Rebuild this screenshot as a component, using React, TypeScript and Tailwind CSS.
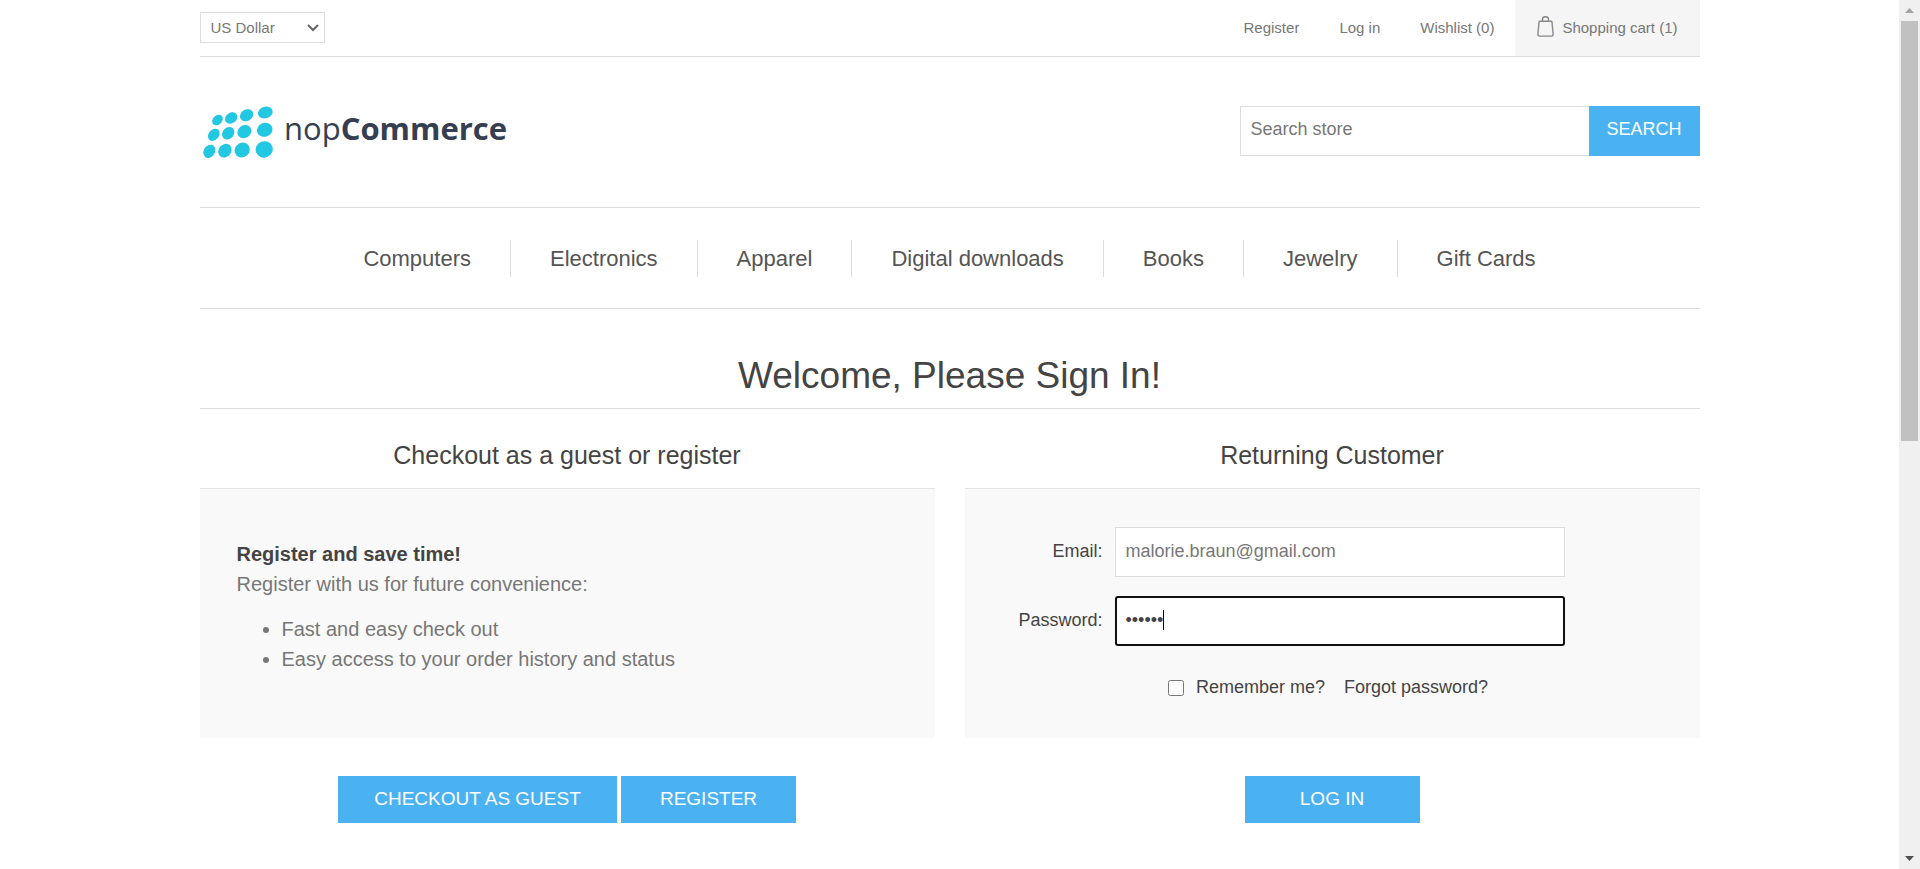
import React, { useState } from "react";

const topLinks = ["Register", "Log in", "Wishlist (0)"];

const categories = [
  "Computers",
  "Electronics",
  "Apparel",
  "Digital downloads",
  "Books",
  "Jewelry",
  "Gift Cards",
];

const benefits = ["Fast and easy check out", "Easy access to your order history and status"];

// cx, cy, rx, ry, rotation
const logoDots: number[][] = [
  [17.5, 25, 6, 4.6, -45],
  [31.2, 23, 6.6, 5.3, -35],
  [46.6, 20.2, 6.9, 5.7, -30],
  [65.3, 17.5, 7.5, 5.9, -18],
  [13.8, 39.8, 6.8, 5.1, -50],
  [28.2, 38.3, 6.8, 5.6, -45],
  [44.4, 36.6, 7.3, 6.3, -35],
  [64.7, 34.8, 7.9, 6.9, -20],
  [9.3, 56.3, 7, 5.6, -55],
  [24.9, 55.7, 7.3, 6.3, -50],
  [42.2, 55, 7.9, 7.2, -45],
  [64.2, 54.4, 8.6, 8.2, -20],
];

function Logo() {
  return (
    <a href="#" aria-label="nopCommerce" className="flex items-center">
      <svg width="312" height="75" viewBox="0 -2 312 75" aria-hidden="true">
        <g fill="#22c7e1">
          {logoDots.map(([cx, cy, rx, ry, a]) => (
            <ellipse
              key={`${cx}-${cy}`}
              cx={cx}
              cy={cy}
              rx={rx}
              ry={ry}
              transform={`rotate(${a} ${cx} ${cy})`}
            />
          ))}
        </g>
        <text x="84" y="45" fontSize="31" fill="#363f51" fontFamily="'Open Sans', sans-serif">
          nop
          <tspan fontWeight="700">Commerce</tspan>
        </text>
      </svg>
    </a>
  );
}

function BagIcon() {
  return (
    <svg
      className="mb-1"
      width="17"
      height="21"
      viewBox="0 0 17 21"
      fill="none"
      stroke="#888"
      strokeWidth="1.4"
      aria-hidden="true"
    >
      <path d="M3 5.2h11c.6 0 .9.3 1 .9l1.1 12.2c.1 1-.6 1.8-1.6 1.8h-12c-1 0-1.700-.8-1.600-1.800L2 6.100c.1-.6.4-.9 1-.9z" />
      <path d="M5.500 5V3.200C5.500 1.700 6.800.8 8.500.8s3 .9 3 2.400V5" />
    </svg>
  );
}

function TopBar() {
  return (
    <div className="flex h-[57px] items-stretch justify-between border-b border-[#ddd] text-[15px] text-[#777]">
      <div className="relative mt-3 h-[31px] w-[125px]">
        <select
          aria-label="Currency"
          className="h-full w-full appearance-none border border-[#ddd] bg-white pt-px pl-[10px] text-[15px] text-[#777] outline-none"
        >
          <option>US Dollar</option>
          <option>Euro</option>
        </select>
        <svg
          className="pointer-events-none absolute top-3 right-[6px]"
          width="12"
          height="8"
          viewBox="0 0 12 8"
          fill="none"
          stroke="#666"
          strokeWidth="2"
          aria-hidden="true"
        >
          <path d="M1 1l5 5 5-5" />
        </svg>
      </div>
      <div className="flex">
        <nav className="flex items-center gap-10 pr-[21px]">
          {topLinks.map((label) => (
            <a key={label} href="#">
              {label}
            </a>
          ))}
        </nav>
        <a href="#" className="flex items-center gap-2 bg-[#f5f5f5] px-[22px]">
          <BagIcon />
          <span>Shopping cart (1)</span>
        </a>
      </div>
    </div>
  );
}

function Header() {
  return (
    <header>
      <TopBar />
      <div className="flex items-center justify-between pt-9 pb-[39px]">
        <Logo />
        <form className="flex h-[50px]" onSubmit={(e) => e.preventDefault()}>
          <input
            type="text"
            aria-label="Search store"
            placeholder="Search store"
            className="w-[349px] border border-r-0 border-[#ddd] bg-white px-[10px] pb-[2px] text-[18px] outline-none placeholder:text-[#777]"
          />
          <button type="submit" className="w-[111px] bg-[#4ab2f1] pb-[2px] text-[18px] text-white">
            SEARCH
          </button>
        </form>
      </div>
      <nav className="flex justify-center border-y border-[#ddd] pt-8 pb-[31px]">
        <ul className="flex divide-x divide-[#ddd]">
          {categories.map((label) => (
            <li key={label} className="px-[39px]">
              <a href="#" className="block text-[22px] leading-[37px] text-[#555]">
                {label}
              </a>
            </li>
          ))}
        </ul>
      </nav>
    </header>
  );
}

function ActionButton({ children, className }: { children: React.ReactNode; className: string }) {
  return (
    <button type="button" className={`h-[47px] bg-[#4ab2f1] text-[19px] text-white ${className}`}>
      {children}
    </button>
  );
}

function Panel({ title, children, actions }: { title: string; children: React.ReactNode; actions: React.ReactNode }) {
  return (
    <section className="flex flex-col">
      <h2 className="pb-4 text-center text-[25px] leading-[33px] text-[#444]">{title}</h2>
      <div className="h-[250px] border-t border-[#e4e4e4] bg-[#f9f9f9]">{children}</div>
      <div className="flex justify-center gap-1 pt-[38px]">{actions}</div>
    </section>
  );
}

function LoginForm() {
  const [email, setEmail] = useState("malorie.braun@gmail.com");
  const [password, setPassword] = useState("secret");
  return (
    <form className="pt-[38px] text-[18px] text-[#444]" onSubmit={(e) => e.preventDefault()}>
      <div className="mb-[19px] flex items-center gap-3">
        <label htmlFor="email" className="w-[138px] pb-px text-right">
          Email:
        </label>
        <input
          id="email"
          type="email"
          value={email}
          onChange={(e) => setEmail(e.target.value)}
          className="h-[50px] w-[450px] border border-[#ddd] bg-white px-[10px] pb-px text-[#777] outline-none"
        />
      </div>
      <div className="flex items-center gap-3">
        <label htmlFor="password" className="w-[138px] pb-px text-right">
          Password:
        </label>
        <div className="relative">
          <input
            id="password"
            type="password"
            value={password}
            onChange={(e) => setPassword(e.target.value)}
            className="block h-[50px] w-[450px] rounded-[3px] border-2 border-[#101010] bg-white px-[9px] pb-px outline-none"
          />
          <span className="absolute top-[14px] left-[48px] h-5 w-px bg-black" />
        </div>
      </div>
      <div className="flex items-center justify-center gap-[19px] pt-7 pr-2">
        <div className="flex items-center gap-3">
          <input id="remember" type="checkbox" className="size-4" />
          <label htmlFor="remember">Remember me?</label>
        </div>
        <a href="#">Forgot password?</a>
      </div>
    </form>
  );
}

function ScrollBar() {
  return (
    <div className="flex w-[21px] shrink-0 flex-col items-center bg-[#f0f0f0]" aria-hidden="true">
      <div className="flex h-[21px] items-center">
        <svg width="9" height="5" viewBox="0 0 9 5" fill="#a3a3a3">
          <path d="M4.500 0L9 5H0z" />
        </svg>
      </div>
      <div className="w-[17px] grow-[420] bg-[#c1c1c1]" />
      <div className="grow-[407]" />
      <div className="flex h-[21px] items-center">
        <svg width="9" height="5" viewBox="0 0 9 5" fill="#505050">
          <path d="M0 0h9L4.500 5z" />
        </svg>
      </div>
    </div>
  );
}

export default function App() {
  return (
    <div className="flex h-screen overflow-hidden bg-white font-['Liberation_Sans',Arial,sans-serif]">
      <div className="min-w-0 flex-1 overflow-hidden">
        <div className="mx-auto max-w-[1500px]">
          <Header />
          <main>
            <h1 className="border-b border-[#ddd] pt-[42px] pb-[7px] text-center text-[37px] leading-[50px] text-[#444]">
              Welcome, Please Sign In!
            </h1>
            <div className="grid grid-cols-2 gap-[30px] pt-[30px]">
              <Panel
                title="Checkout as a guest or register"
                actions={
                  <>
                    <ActionButton className="w-[279px]">CHECKOUT AS GUEST</ActionButton>
                    <ActionButton className="w-[175px]">REGISTER</ActionButton>
                  </>
                }
              >
                <div className="px-[37px] pt-[50px] text-[20px] leading-[30px] text-[#777]">
                  <p className="font-bold text-[#444]">Register and save time!</p>
                  <p>Register with us for future convenience:</p>
                  <ul className="mt-[15px] list-disc pl-[45px]">
                    {benefits.map((b) => (
                      <li key={b}>{b}</li>
                    ))}
                  </ul>
                </div>
              </Panel>
              <Panel title="Returning Customer" actions={<ActionButton className="w-[175px]">LOG IN</ActionButton>}>
                <LoginForm />
              </Panel>
            </div>
          </main>
        </div>
      </div>
      <ScrollBar />
    </div>
  );
}
